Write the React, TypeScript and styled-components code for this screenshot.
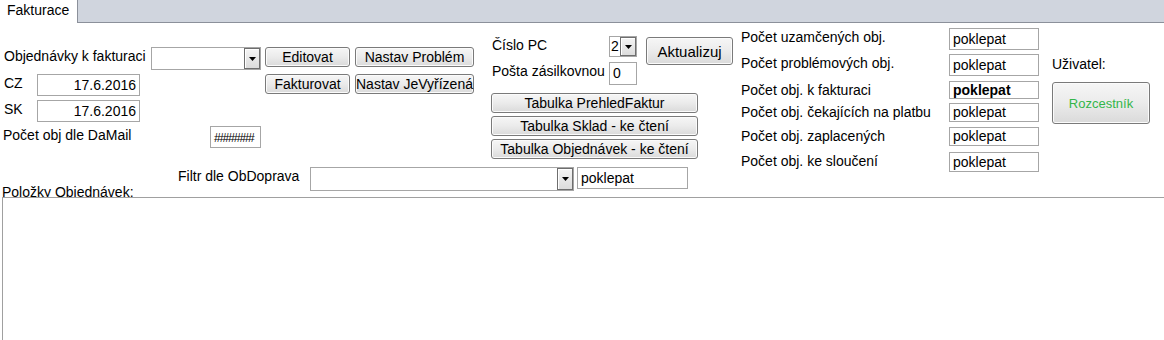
import styled, { createGlobalStyle } from 'styled-components';

const GlobalStyle = createGlobalStyle`
  html, body {
    margin: 0;
    padding: 0;
    background: #fff;
  }
  body {
    font-family: "Liberation Sans", Arial, sans-serif;
    font-size: 14px;
    color: #000;
  }
`;

type Stat = { label: string; h: number; mt: number; bold?: boolean };

const stats: Stat[] = [
  { label: 'Počet uzamčených obj.', h: 22, mt: 0 },
  { label: 'Počet problémových obj.', h: 22, mt: 4 },
  { label: 'Počet obj. k fakturaci', h: 18, mt: 5, bold: true },
  { label: 'Počet obj. čekajících na platbu', h: 19, mt: 4 },
  { label: 'Počet obj. zaplacených', h: 19, mt: 5 },
  { label: 'Počet obj. ke sloučení', h: 20, mt: 6 },
];

const tableButtons = [
  'Tabulka PrehledFaktur',
  'Tabulka Sklad - ke čtení',
  'Tabulka Objednávek - ke čtení',
];

const Arrow = () => (
  <svg width="7" height="4" viewBox="0 0 7 4">
    <polygon points="0,0 7,0 3.5,4" fill="#000" />
  </svg>
);

const ComboBox = ({ w, h, value }: { w: number; h: number; value?: string }) => (
  <Combo $w={w} $h={h}>
    <ComboValue>{value}</ComboValue>
    <DropBtn>
      <Arrow />
    </DropBtn>
  </Combo>
);

const App = () => {
  return (
    <Page>
      <GlobalStyle />
      <TabBar>
        <Tab>Fakturace</Tab>
        <TabFill />
      </TabBar>

      <TopArea>
        {/* objednavky, datumy */}
        <Column $mt={24} $ml={0} $w={262}>
          <FieldRow $h={23}>
            <Label $w={151} $pl={4}>
              Objednávky k fakturaci
            </Label>
            <ComboBox w={110} h={23} />
          </FieldRow>
          <FieldRow $h={22} $mt={4}>
            <Label $w={37} $pl={4}>
              CZ
            </Label>
            <TextBox $w={103} $h={22} $align="right">
              17.6.2016
            </TextBox>
          </FieldRow>
          <FieldRow $h={22} $mt={4}>
            <Label $w={37} $pl={4}>
              SK
            </Label>
            <TextBox $w={103} $h={22} $align="right">
              17.6.2016
            </TextBox>
          </FieldRow>
          <FieldRow $h={22} $mt={4}>
            <Label $w={210} $pl={3}>
              Počet obj dle DaMail
            </Label>
            <TextBox $w={51} $h={22}>
              <Hashes>#######</Hashes>
            </TextBox>
          </FieldRow>
        </Column>

        {/* akce */}
        <Column $mt={24} $ml={3} $w={209}>
          <ButtonGrid>
            <Btn>Editovat</Btn>
            <Btn>Nastav Problém</Btn>
            <Btn>Fakturovat</Btn>
            <Btn>Nastav JeVyřízená</Btn>
          </ButtonGrid>
        </Column>

        {/* PC a tabulky */}
        <Column $mt={13} $ml={17} $w={242}>
          <PcBlock>
            <PcFields>
              <Label $w={118} $pl={1}>
                Číslo PC
              </Label>
              <ComboBox w={28} h={21} value="2" />
              <Label $w={118} $pl={1}>
                Pošta zásilkovnou
              </Label>
              <TextBox $w={28} $h={23}>
                0
              </TextBox>
            </PcFields>
            <Btn $w={87} $h={28} $size={15} $ml={9} $mt={1}>
              Aktualizuj
            </Btn>
          </PcBlock>
          <TableButtons>
            {tableButtons.map((t) => (
              <Btn key={t} $w={207} $h={20}>
                {t}
              </Btn>
            ))}
          </TableButtons>
        </Column>

        {/* pocty */}
        <Column $mt={5} $ml={8} $w={298}>
          {stats.map((s) => (
            <FieldRow key={s.label} $h={s.h} $mt={s.mt}>
              <Label $w={208}>{s.label}</Label>
              <TextBox $w={90} $h={s.h} $bold={s.bold}>
                poklepat
              </TextBox>
            </FieldRow>
          ))}
        </Column>

        {/* uzivatel */}
        <Column $mt={32} $ml={13} $w={98}>
          <Label $w={98}>Uživatel:</Label>
          <Btn $w={98} $h={42} $mt={9} $color="#33b64a" $size={13}>
            Rozcestník
          </Btn>
        </Column>
      </TopArea>

      <FilterRow>
        <SubformLabel>Položky Objednávek:</SubformLabel>
        <FilterLabel>Filtr dle ObDoprava</FilterLabel>
        <ComboBox w={264} h={24} />
        <TextBox $w={111} $h={22} $ml={3}>
          poklepat
        </TextBox>
      </FilterRow>

      <Subform />
    </Page>
  );
};

export default App;

const Page = styled.div`
  width: 1164px;
  height: 340px;
  overflow: hidden;
  background: #fff;
  display: flex;
  flex-direction: column;
`;

const TabBar = styled.div`
  display: flex;
  height: 23px;
  flex-shrink: 0;
  background: #d0d5de;
`;

const Tab = styled.div`
  width: 78px;
  height: 23px;
  box-sizing: border-box;
  padding-left: 7px;
  line-height: 20px;
  font-size: 14px;
  background: #fff;
  border-right: 1px solid #8b909a;
`;

const TabFill = styled.div`
  flex: 1;
  height: 22px;
  border-bottom: 1px solid #8b909a;
`;

const TopArea = styled.div`
  display: flex;
  align-items: flex-start;
  height: 144px;
  flex-shrink: 0;
`;

const Column = styled.div<{ $mt: number; $ml: number; $w: number }>`
  display: flex;
  flex-direction: column;
  margin-top: ${(p) => p.$mt}px;
  margin-left: ${(p) => p.$ml}px;
  width: ${(p) => p.$w}px;
  flex-shrink: 0;
`;

const FieldRow = styled.div<{ $h: number; $mt?: number }>`
  display: flex;
  align-items: flex-start;
  height: ${(p) => p.$h}px;
  margin-top: ${(p) => p.$mt ?? 0}px;
`;

const Label = styled.div<{ $w: number; $pl?: number }>`
  width: ${(p) => p.$w}px;
  box-sizing: border-box;
  padding-left: ${(p) => p.$pl ?? 0}px;
  line-height: 18px;
  white-space: nowrap;
  flex-shrink: 0;
`;

const TextBox = styled.div<{
  $w: number;
  $h: number;
  $align?: 'left' | 'right';
  $bold?: boolean;
  $ml?: number;
}>`
  width: ${(p) => p.$w}px;
  height: ${(p) => p.$h}px;
  margin-left: ${(p) => p.$ml ?? 0}px;
  box-sizing: border-box;
  border: 1px solid #a6a6a6;
  background: #fff;
  padding: 0 3px;
  line-height: ${(p) => p.$h - 2}px;
  text-align: ${(p) => p.$align ?? 'left'};
  font-weight: ${(p) => (p.$bold ? 700 : 400)};
  white-space: nowrap;
  overflow: hidden;
  flex-shrink: 0;
`;

const Hashes = styled.span`
  font-size: 12px;
  letter-spacing: -1px;
`;

const Combo = styled.div<{ $w: number; $h: number }>`
  display: flex;
  align-items: stretch;
  width: ${(p) => p.$w}px;
  height: ${(p) => p.$h}px;
  box-sizing: border-box;
  border: 1px solid #a6a6a6;
  background: #fff;
  flex-shrink: 0;
`;

const ComboValue = styled.div`
  flex: 1;
  padding-left: 1px;
  line-height: 18px;
  overflow: hidden;
`;

const DropBtn = styled.div`
  width: 16px;
  box-sizing: border-box;
  border: 1px solid #6e6e6e;
  box-shadow: inset 1px 1px 0 #fff;
  background: linear-gradient(#f4f4f4, #dcdcdc);
  display: flex;
  align-items: center;
  justify-content: center;
`;

const ButtonGrid = styled.div`
  display: grid;
  grid-template-columns: 85px 119px;
  grid-auto-rows: 20px;
  column-gap: 5px;
  row-gap: 7px;
`;

const Btn = styled.div<{
  $w?: number;
  $h?: number;
  $mt?: number;
  $ml?: number;
  $color?: string;
  $size?: number;
}>`
  ${(p) => (p.$w ? `width: ${p.$w}px;` : '')}
  ${(p) => (p.$h ? `height: ${p.$h}px;` : '')}
  margin-top: ${(p) => p.$mt ?? 0}px;
  margin-left: ${(p) => p.$ml ?? 0}px;
  box-sizing: border-box;
  border: 1px solid #7a7a7a;
  border-radius: 3px;
  background: linear-gradient(#f6f6f6 0%, #ebebeb 50%, #dadada 100%);
  box-shadow: inset 0 0 0 1px #fbfbfb;
  color: ${(p) => p.$color ?? '#000'};
  font-size: ${(p) => p.$size ?? 14}px;
  display: flex;
  align-items: center;
  justify-content: center;
  white-space: nowrap;
  flex-shrink: 0;
`;

const PcBlock = styled.div`
  display: flex;
  align-items: flex-start;
`;

const PcFields = styled.div`
  display: grid;
  grid-template-columns: 118px 28px;
  grid-template-rows: 21px 23px;
  row-gap: 5px;
`;

const TableButtons = styled.div`
  display: flex;
  flex-direction: column;
  gap: 3px;
  margin-top: 8px;
`;

const FilterRow = styled.div`
  display: flex;
  align-items: flex-start;
  height: 30px;
  padding-left: 2px;
  flex-shrink: 0;
`;

const SubformLabel = styled.div`
  width: 176px;
  margin-top: 16px;
  line-height: 18px;
  white-space: nowrap;
  flex-shrink: 0;
`;

const FilterLabel = styled.div`
  width: 132px;
  line-height: 18px;
  white-space: nowrap;
  flex-shrink: 0;
`;

const Subform = styled.div`
  position: relative;
  flex: 1;
  margin-left: 2px;
  border-top: 1px solid #a0a0a0;
  border-left: 1px solid #a0a0a0;
  background: #fff;
`;
